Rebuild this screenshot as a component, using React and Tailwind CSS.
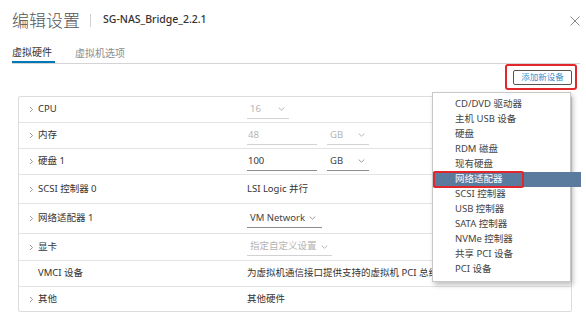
import React from "react";

const Chevron = ({ hidden }) => (
  <svg width="5" height="7" viewBox="0 0 5 7" className={hidden ? "invisible" : ""}>
    <path d="M1 1l2.6 2.5L1 6" fill="none" stroke="#9a9a9a" strokeWidth="1" />
  </svg>
);

const Down = ({ color = "#9a9a9a" }) => (
  <svg width="7" height="4" viewBox="0 0 7 4" className="shrink-0">
    <path d="M0.7 0.6l2.8 2.6L6.3 0.6" fill="none" stroke={color} strokeWidth="1" />
  </svg>
);

const Select = ({ value, w, disabled, spread = true }) => (
  <div
    className={`flex h-[18px] items-center border-b pl-[3px] pr-[4px] whitespace-nowrap ${w} ${
      spread ? "justify-between" : "gap-[4px]"
    } ${disabled ? "border-[#d2d2d2] text-[#b4b4b4]" : "border-[#8c8c8c] text-[#444]"}`}
  >
    <span>{value}</span>
    <Down color={disabled ? "#b4b4b4" : "#9a9a9a"} />
  </div>
);

const Input = ({ value, disabled }) => (
  <div
    className={`flex h-[18px] w-[70px] items-center border-b pl-[1px] ${
      disabled ? "border-[#d2d2d2] text-[#b4b4b4]" : "border-[#8c8c8c] text-[#333]"
    }`}
  >
    {value}
  </div>
);

const rows = [
  { label: "CPU", h: "h-[26px]", value: <Select value="16" w="w-[42px]" disabled /> },
  {
    label: "内存",
    h: "h-[26px]",
    value: (
      <div className="flex items-center gap-[10px]">
        <Input value="48" disabled />
        <Select value="GB" w="w-[42px]" disabled />
      </div>
    ),
  },
  {
    label: "硬盘 1",
    h: "h-[26px]",
    value: (
      <div className="flex items-center gap-[10px]">
        <Input value="100" />
        <Select value="GB" w="w-[42px]" />
      </div>
    ),
  },
  { label: "SCSI 控制器 0", h: "h-[29px]", value: <span className="text-[#333]">LSI Logic 并行</span> },
  {
    label: "网络适配器 1",
    h: "h-[30px]",
    value: <Select value="VM Network" w="w-[75px]" spread={false} />,
  },
  {
    label: "显卡",
    h: "h-[27px]",
    value: <Select value="指定自定义设置" w="w-[85px]" disabled spread={false} />,
  },
  {
    label: "VMCI 设备",
    h: "h-[26px]",
    noChevron: true,
    value: (
      <span className="whitespace-nowrap text-[#333]">
        为虚拟机通信接口提供支持的虚拟机 PCI 总线
      </span>
    ),
  },
  { label: "其他", h: "h-[24px]", value: <span className="text-[#333]">其他硬件</span> },
];

const menu = [
  "CD/DVD 驱动器",
  "主机 USB 设备",
  "硬盘",
  "RDM 磁盘",
  "现有硬盘",
  "网络适配器",
  "SCSI 控制器",
  "USB 控制器",
  "SATA 控制器",
  "NVMe 控制器",
  "共享 PCI 设备",
  "PCI 设备",
];

export default function App() {
  return (
    <div className="relative h-[319px] w-[586px] overflow-hidden bg-white font-['Noto_Sans','Noto_Sans_CJK_SC',sans-serif] text-[9.5px] text-[#333]">
      {/* header */}
      <div className="flex h-[40px] items-center pl-[12px] pr-[6px]">
        <span className="text-[17px] leading-none font-light text-[#565656]">编辑设置</span>
        <span className="mr-[12px] ml-[10px] h-[13px] w-px bg-[#d0d0d0]" />
        <span className="text-[10.5px] font-medium text-[#333]">SG-NAS_Bridge_2.2.1</span>
        <svg width="10" height="10" viewBox="0 0 10 10" className="ml-auto mt-[2px]">
          <path d="M0.5 0.5l9 9M9.5 0.5l-9 9" stroke="#8a8a8a" strokeWidth="1" />
        </svg>
      </div>

      {/* tabs */}
      <div className="mr-[6px] ml-[12px] flex h-[24px] border-b border-[#d4d4d4] text-[10px]">
        <div className="flex h-[23px] w-[43px] items-center border-b-2 border-[#0079b8] pt-[4px] text-[#333]">
          虚拟硬件
        </div>
        <div className="ml-[20px] flex h-[23px] items-center pt-[4px] text-[#8c8c8c]">虚拟机选项</div>
      </div>

      {/* add device */}
      <div className="flex justify-end pr-[9px]">
        <div className="rounded-[3px] border-2 border-[#e3262b] pt-[4px] pr-[3px] pb-[3px] pl-[6px]">
          <div className="flex h-[15px] w-[59px] items-center justify-center rounded-[2px] border border-[#555] text-[8.5px] text-[#3b8fcf]">
            添加新设备
          </div>
        </div>
      </div>

      {/* table */}
      <div className="mt-[6px] mr-[14px] ml-[18px] rounded-[2px] border border-[#dcdcdc]">
        {rows.map((r, i) => (
          <div
            key={r.label}
            className={`flex items-center ${r.h} ${i < rows.length - 1 ? "border-b border-[#e3e3e3]" : ""}`}
          >
            <div className="flex w-[228px] items-center pl-[10px]">
              <Chevron hidden={r.noChevron} />
              <span className="ml-[4px] text-[#333]">{r.label}</span>
            </div>
            <div className="flex items-center">{r.value}</div>
          </div>
        ))}
      </div>

      {/* dropdown menu */}
      <div className="absolute top-[92px] left-[432px] h-[190px] w-[139px] border border-[#c8c8c8] bg-white pt-[4px] shadow-[2px_3px_5px_rgba(0,0,0,0.25)]">
        {menu.map((m) =>
          m === "网络适配器" ? (
            <div
              key={m}
              className="relative mr-[-11px] flex h-[15px] items-center bg-[#5a7a9e] pl-[22px] text-white"
            >
              {m}
              <span className="absolute top-[-1px] bottom-[-1px] left-0 w-[91px] rounded-[2px] border-2 border-[#e3262b]" />
            </div>
          ) : (
            <div key={m} className="flex h-[15px] items-center pl-[22px] text-[#444]">
              {m}
            </div>
          )
        )}
      </div>
    </div>
  );
}
